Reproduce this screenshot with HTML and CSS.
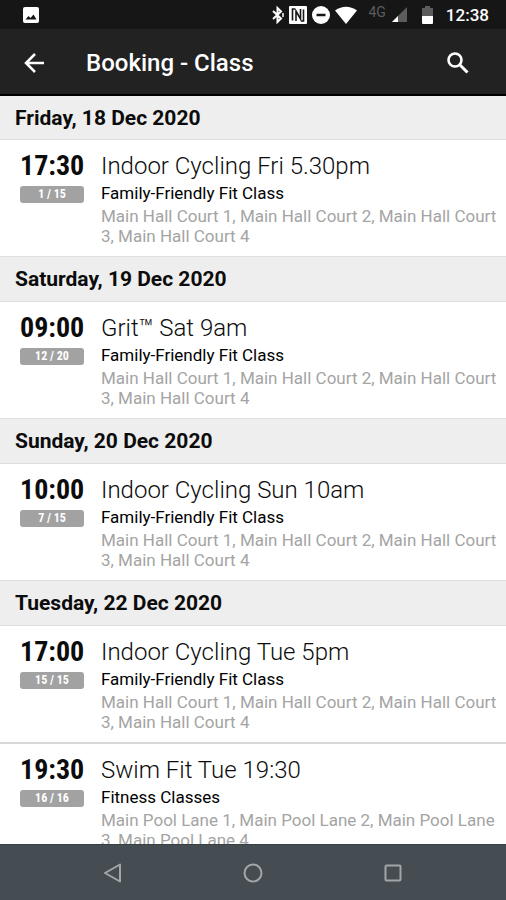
FILE: index.html
```html
<!DOCTYPE html>
<html lang="en">
<head>
<meta charset="utf-8">
<meta name="viewport" content="width=device-width, initial-scale=1">
<title>Booking - Class</title>
<link rel="stylesheet" href="styles.css">
</head>
<body>
<div class="status-bar">
  <svg class="picture" width="16" height="16" viewBox="0 0 16 16" aria-hidden="true"><rect width="16" height="16" rx="2" fill="#fff"/><path d="M2.500 12.500 5.500 9l2 2 3-3.500 3 5z" fill="#161616"/></svg>
  <svg class="bluetooth" width="12" height="18" viewBox="0 0 12 18" fill="none" stroke="#fff" stroke-width="2" aria-hidden="true"><path d="M1 5 9 12.500 5.500 16V2L9 5.500 1 13"/><path d="M11 7v4" stroke-width="1.500"/></svg>
  <svg class="nfc" width="18" height="18" viewBox="0 0 18 18" aria-hidden="true"><rect width="18" height="18" rx="1" fill="#fff"/><path d="M6 3H3.500v11.500M12 15h2.500V3.500M7 15V5l4.500 8V3" fill="none" stroke="#161616" stroke-width="1.600"/></svg>
  <svg class="dnd" width="18" height="18" viewBox="0 0 18 18" aria-hidden="true"><circle cx="9" cy="9" r="9" fill="#fff"/><path d="M4.500 9h9" stroke="#161616" stroke-width="2.500"/></svg>
  <svg class="wifi" width="22" height="18" viewBox="0 0 22 18" aria-hidden="true"><path d="M0 4.500Q11-3 22 4.500L11 18z" fill="#fff"/></svg>
  <span class="network">4G</span>
  <svg class="signal" width="15" height="15" viewBox="0 0 15 15" aria-hidden="true"><path d="M15 0v15H0z" fill="#5c5c5c"/><path d="M6 9v6H0z" fill="#fff"/></svg>
  <svg class="battery" width="11" height="18" viewBox="0 0 11 18" aria-hidden="true"><path d="M3 0h5v2h3v9H0V2h3z" fill="#5c5c5c"/><path d="M0 10h11v7a1 1 0 0 1-1 1H1a1 1 0 0 1-1-1z" fill="#fff"/></svg>
  <span class="clock">12:38</span>
</div>
<header class="app-bar">
  <button class="icon-button" type="button" aria-label="Back"><svg width="20" height="20" viewBox="0 0 20 20" fill="none" stroke="#fff" stroke-width="2.500"><path d="M20 10H2M11 1l-9 9 9 9"/></svg></button>
  <h1>Booking - Class</h1>
  <button class="icon-button" type="button" aria-label="Search"><svg width="22" height="22" viewBox="0 0 22 22" fill="none" stroke="#fff"><circle cx="8" cy="8" r="6.500" stroke-width="2.600"/><path d="m13 13 7.500 7.500" stroke-width="3"/></svg></button>
</header>
<main class="schedule">
  <section>
    <h2>Friday, 18 Dec 2020</h2>
    <article class="session">
      <div class="slot"><time>17:30</time><span class="places">1 / 15</span></div>
      <div class="details"><h3>Indoor Cycling Fri 5.30pm</h3><p class="category">Family-Friendly Fit Class</p><p class="location">Main Hall Court 1, Main Hall Court 2, Main Hall Court 3, Main Hall Court 4</p></div>
    </article>
  </section>
  <section>
    <h2>Saturday, 19 Dec 2020</h2>
    <article class="session">
      <div class="slot"><time>09:00</time><span class="places">12 / 20</span></div>
      <div class="details"><h3>Grit™ Sat 9am</h3><p class="category">Family-Friendly Fit Class</p><p class="location">Main Hall Court 1, Main Hall Court 2, Main Hall Court 3, Main Hall Court 4</p></div>
    </article>
  </section>
  <section>
    <h2>Sunday, 20 Dec 2020</h2>
    <article class="session">
      <div class="slot"><time>10:00</time><span class="places">7 / 15</span></div>
      <div class="details"><h3>Indoor Cycling Sun 10am</h3><p class="category">Family-Friendly Fit Class</p><p class="location">Main Hall Court 1, Main Hall Court 2, Main Hall Court 3, Main Hall Court 4</p></div>
    </article>
  </section>
  <section>
    <h2>Tuesday, 22 Dec 2020</h2>
    <article class="session">
      <div class="slot"><time>17:00</time><span class="places">15 / 15</span></div>
      <div class="details"><h3>Indoor Cycling Tue 5pm</h3><p class="category">Family-Friendly Fit Class</p><p class="location">Main Hall Court 1, Main Hall Court 2, Main Hall Court 3, Main Hall Court 4</p></div>
    </article>
    <article class="session">
      <div class="slot"><time>19:30</time><span class="places">16 / 16</span></div>
      <div class="details"><h3>Swim Fit Tue 19:30</h3><p class="category">Fitness Classes</p><p class="location">Main Pool Lane 1, Main Pool Lane 2, Main Pool Lane 3, Main Pool Lane 4</p></div>
    </article>
  </section>
</main>
<nav class="system-nav" aria-label="System">
  <button type="button" aria-label="Back"><svg width="20" height="20" viewBox="0 0 20 20"><path d="M17 1.500v17L2 10z"/></svg></button>
  <button type="button" aria-label="Home"><svg width="20" height="20" viewBox="0 0 20 20"><circle cx="10" cy="10" r="8.500"/></svg></button>
  <button type="button" aria-label="Recent apps"><svg width="20" height="20" viewBox="0 0 20 20"><rect x="2.500" y="2.500" width="15" height="15" rx="1"/></svg></button>
</nav>
</body>
</html>
```
FILE: styles.css
```css
* {
  box-sizing: border-box;
}

body {
  margin: 0;
  height: 100vh;
  display: flex;
  flex-direction: column;
  overflow: hidden;
  background: #fff;
  color: #0c0c0c;
  font-family: Roboto, sans-serif;
}

h1, h2, h3, p {
  margin: 0;
}

button {
  display: flex;
  align-items: center;
  justify-content: center;
  padding: 0;
  border: 0;
  background: none;
}

.status-bar {
  flex: none;
  display: flex;
  align-items: center;
  height: 29px;
  padding: 0 17px 0 23px;
  background: #161616;
  color: #fff;
}

.picture {
  margin-right: auto;
}

.bluetooth {
  margin-right: 5px;
}

.nfc {
  margin-right: 5px;
}

.dnd {
  margin-right: 5px;
}

.wifi {
  margin-right: 11px;
}

.network {
  align-self: flex-start;
  margin: 4px 6px 0 0;
  color: #5c5c5c;
  font-size: 14px;
  line-height: 16px;
}

.signal {
  margin-right: 15px;
}

.battery {
  margin-right: 13px;
}

.clock {
  font-size: 17px;
  font-weight: 500;
}

.app-bar {
  flex: none;
  display: flex;
  align-items: center;
  height: 67px;
  padding: 3px 24px 0 10px;
  border-bottom: 2px solid #000;
  background: #222;
  color: #fff;
}

.app-bar h1 {
  flex: 1;
  margin-left: 28px;
  font-size: 24px;
  font-weight: 500;
  line-height: 32px;
}

.icon-button {
  width: 48px;
  height: 48px;
}

.schedule {
  flex: 1;
  min-height: 0;
  overflow: hidden;
}

.schedule h2 {
  padding: 8px 15px;
  border-top: 1px solid #e0e0e0;
  border-bottom: 1px solid #dedede;
  background: #eee;
  font-size: 21px;
  font-weight: 700;
  line-height: 28px;
}

.schedule section:first-child h2 {
  padding-bottom: 7px;
  border-top-width: 0;
}

.session {
  display: flex;
  gap: 17px;
  padding: 10px 8px 10px 20px;
}

.session + .session {
  border-top: 2px solid #d8d8d8;
}

.slot {
  flex: none;
  width: 64px;
  text-align: center;
}

time {
  display: block;
  font-family: "Roboto Condensed", Roboto, sans-serif;
  font-size: 28px;
  font-weight: 700;
  line-height: 32px;
}

.places {
  display: block;
  margin-top: 4px;
  border-radius: 3px;
  background: #a2a2a2;
  color: #fff;
  font-family: "Roboto Condensed", Roboto, sans-serif;
  font-size: 12px;
  font-weight: 700;
  line-height: 17px;
}

.details {
  flex: 1;
  min-width: 0;
}

.details h3 {
  font-size: 24px;
  font-weight: 300;
  line-height: 32px;
}

.category {
  color: #000;
  font-size: 17px;
  line-height: 22px;
}

.location {
  margin-top: 2px;
  color: #a4a4a4;
  font-size: 17px;
  line-height: 20px;
}

.system-nav {
  flex: none;
  display: flex;
  justify-content: center;
  gap: 92px;
  height: 56px;
  border-top: 1px solid #364143;
  background: #454d52;
}

.system-nav button {
  width: 48px;
}

.system-nav svg {
  fill: none;
  stroke: #a1a6a9;
  stroke-width: 2;
  stroke-linejoin: round;
}
```
